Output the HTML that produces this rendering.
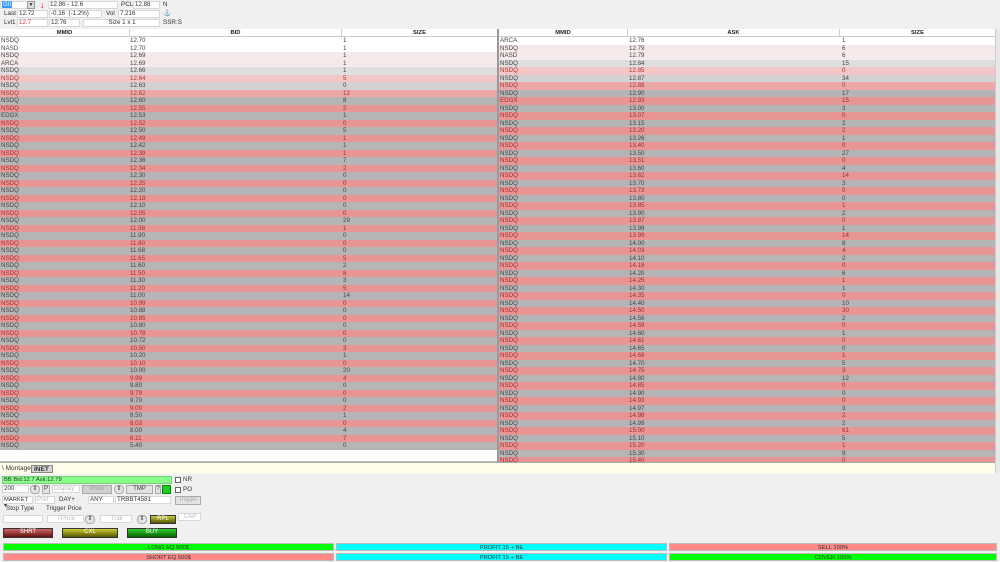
<!DOCTYPE html>
<html><head><meta charset="utf-8"><style>
*{margin:0;padding:0;box-sizing:border-box}
body{width:1000px;height:562px;overflow:hidden;background:#f0f0f0;font-family:"Liberation Sans",sans-serif;font-size:6.3px;color:#333;position:relative}
.abs{position:absolute}
.f{position:absolute;background:#fff;border:1px solid #d8d8d8;height:8px;line-height:6px;padding-left:1px;font-size:6.2px}
.l{position:absolute;font-size:6.3px;line-height:8px}
.tbl{position:absolute;top:29px;background:#fff;overflow:hidden}
.hd{height:8px;background:#fff;border-bottom:1px solid #ccc;position:relative;font-weight:bold;font-size:5.8px;line-height:8px;color:#222}
.hd span{position:absolute;text-align:center;top:0;border-right:1px solid #ccc;height:8px}
.r{height:7.5px;position:relative;line-height:7.5px;font-size:6.2px;color:#444}
.r i,.r b,.r u{position:absolute;font-style:normal;font-weight:normal;text-decoration:none;top:0}
.r i{left:1px}.r b{left:130px}.r u{left:343px}
.w{background:#fff}.a{background:#f6eaea}.g1{background:#dedede}.p1{background:#f3c6c6;color:#a33}.g2{background:#d2d2d2}.p2{background:#eba8a8;color:#a33}.g{background:#b5b5b5}.p{background:#e89595;color:#a42c2c}
.btn{position:absolute;border:1px solid #aaa;background:#e4e4e4;text-align:center;font-size:6px;line-height:7px;height:9px}
.bar{position:absolute;height:8px;text-align:center;font-size:5.8px;line-height:8px;color:#333;border:1px solid #bbb}
</style></head><body>
<!-- header -->
<div class="f" style="left:0;top:1px;width:35px"><span style="background:#39f;color:#fff;padding:0 1px">GII</span></div>
<div class="abs" style="left:27px;top:1px;width:8px;height:8px;background:#ddd;border:1px solid #999;font-size:5px;text-align:center;line-height:6px">▼</div>
<div class="abs" style="left:40px;top:1px;color:#e00;font-size:9px;line-height:8px;font-weight:bold">↓</div>
<div class="f" style="left:48px;top:1px;width:70px">12.86 - 12.6</div>
<div class="l" style="left:121px;top:1px">PCL</div>
<div class="f" style="left:133px;top:1px;width:27px">12.88</div>
<div class="l" style="left:163px;top:1px">N</div>
<div class="l" style="left:4px;top:10px">Last</div>
<div class="f" style="left:17px;top:10px;width:31px">12.72</div>
<div class="f" style="left:49px;top:10px;width:53px">-0.16 &nbsp;(-1.2%)</div>
<div class="l" style="left:106px;top:10px">Vol</div>
<div class="f" style="left:118px;top:10px;width:42px">7.216</div>
<div class="l" style="left:163px;top:10px">⚓</div>
<div class="l" style="left:4px;top:19px">Lvl1</div>
<div class="f" style="left:17px;top:19px;width:31px;color:#e33">12.7</div>
<div class="f" style="left:49px;top:19px;width:31px">12.76</div>
<div class="f" style="left:83px;top:19px;width:77px;text-align:center">Size 1 x 1</div>
<div class="l" style="left:163px;top:19px">SSR:S</div>

<!-- bid table -->
<div class="tbl" style="left:0;width:497px;height:433px">
<div class="hd"><span style="left:0;width:130px">MMID</span><span style="left:130px;width:212px">BID</span><span style="left:342px;width:155px;border:0">SIZE</span></div>
<div class="r w"><i>NSDQ</i><b>12.70</b><u>1</u></div>
<div class="r w"><i>NASD</i><b>12.70</b><u>1</u></div>
<div class="r a"><i>NSDQ</i><b>12.69</b><u>1</u></div>
<div class="r a"><i>ARCA</i><b>12.69</b><u>1</u></div>
<div class="r g1"><i>NSDQ</i><b>12.66</b><u>1</u></div>
<div class="r p1"><i>NSDQ</i><b>12.64</b><u>5</u></div>
<div class="r g2"><i>NSDQ</i><b>12.63</b><u>0</u></div>
<div class="r p2"><i>NSDQ</i><b>12.62</b><u>12</u></div>
<div class="r g"><i>NSDQ</i><b>12.60</b><u>8</u></div>
<div class="r p"><i>NSDQ</i><b>12.55</b><u>2</u></div>
<div class="r g"><i>EDGX</i><b>12.53</b><u>1</u></div>
<div class="r p"><i>NSDQ</i><b>12.52</b><u>0</u></div>
<div class="r g"><i>NSDQ</i><b>12.50</b><u>5</u></div>
<div class="r p"><i>NSDQ</i><b>12.49</b><u>1</u></div>
<div class="r g"><i>NSDQ</i><b>12.42</b><u>1</u></div>
<div class="r p"><i>NSDQ</i><b>12.39</b><u>1</u></div>
<div class="r g"><i>NSDQ</i><b>12.36</b><u>7</u></div>
<div class="r p"><i>NSDQ</i><b>12.34</b><u>2</u></div>
<div class="r g"><i>NSDQ</i><b>12.30</b><u>0</u></div>
<div class="r p"><i>NSDQ</i><b>12.25</b><u>0</u></div>
<div class="r g"><i>NSDQ</i><b>12.20</b><u>0</u></div>
<div class="r p"><i>NSDQ</i><b>12.18</b><u>0</u></div>
<div class="r g"><i>NSDQ</i><b>12.10</b><u>0</u></div>
<div class="r p"><i>NSDQ</i><b>12.05</b><u>0</u></div>
<div class="r g"><i>NSDQ</i><b>12.00</b><u>29</u></div>
<div class="r p"><i>NSDQ</i><b>11.98</b><u>1</u></div>
<div class="r g"><i>NSDQ</i><b>11.90</b><u>0</u></div>
<div class="r p"><i>NSDQ</i><b>11.80</b><u>0</u></div>
<div class="r g"><i>NSDQ</i><b>11.68</b><u>0</u></div>
<div class="r p"><i>NSDQ</i><b>11.65</b><u>5</u></div>
<div class="r g"><i>NSDQ</i><b>11.60</b><u>2</u></div>
<div class="r p"><i>NSDQ</i><b>11.50</b><u>8</u></div>
<div class="r g"><i>NSDQ</i><b>11.30</b><u>3</u></div>
<div class="r p"><i>NSDQ</i><b>11.20</b><u>5</u></div>
<div class="r g"><i>NSDQ</i><b>11.00</b><u>14</u></div>
<div class="r p"><i>NSDQ</i><b>10.99</b><u>0</u></div>
<div class="r g"><i>NSDQ</i><b>10.88</b><u>0</u></div>
<div class="r p"><i>NSDQ</i><b>10.85</b><u>0</u></div>
<div class="r g"><i>NSDQ</i><b>10.80</b><u>0</u></div>
<div class="r p"><i>NSDQ</i><b>10.78</b><u>0</u></div>
<div class="r g"><i>NSDQ</i><b>10.72</b><u>0</u></div>
<div class="r p"><i>NSDQ</i><b>10.50</b><u>3</u></div>
<div class="r g"><i>NSDQ</i><b>10.20</b><u>1</u></div>
<div class="r p"><i>NSDQ</i><b>10.10</b><u>0</u></div>
<div class="r g"><i>NSDQ</i><b>10.00</b><u>20</u></div>
<div class="r p"><i>NSDQ</i><b>9.99</b><u>4</u></div>
<div class="r g"><i>NSDQ</i><b>9.80</b><u>0</u></div>
<div class="r p"><i>NSDQ</i><b>9.79</b><u>0</u></div>
<div class="r g"><i>NSDQ</i><b>9.70</b><u>0</u></div>
<div class="r p"><i>NSDQ</i><b>9.00</b><u>2</u></div>
<div class="r g"><i>NSDQ</i><b>8.50</b><u>1</u></div>
<div class="r p"><i>NSDQ</i><b>8.03</b><u>0</u></div>
<div class="r g"><i>NSDQ</i><b>8.00</b><u>4</u></div>
<div class="r p"><i>NSDQ</i><b>6.11</b><u>7</u></div>
<div class="r g"><i>NSDQ</i><b>5.40</b><u>0</u></div>
</div>
<div class="abs" style="left:0;top:461px;width:497px;height:1px;background:#bbb"></div>
<div class="abs" style="left:497px;top:29px;width:2px;height:433px;background:#999"></div>

<!-- ask table -->
<div class="tbl" style="left:499px;width:496px;height:433px">
<div class="hd"><span style="left:0;width:129px">MMID</span><span style="left:129px;width:212px">ASK</span><span style="left:341px;width:155px;border:0">SIZE</span></div>
<div class="r w"><i>ARCA</i><b>12.76</b><u>1</u></div>
<div class="r a"><i>NSDQ</i><b>12.79</b><u>6</u></div>
<div class="r a"><i>NASD</i><b>12.79</b><u>6</u></div>
<div class="r g1"><i>NSDQ</i><b>12.84</b><u>15</u></div>
<div class="r p1"><i>NSDQ</i><b>12.85</b><u>0</u></div>
<div class="r g2"><i>NSDQ</i><b>12.87</b><u>34</u></div>
<div class="r p2"><i>NSDQ</i><b>12.88</b><u>0</u></div>
<div class="r g"><i>NSDQ</i><b>12.90</b><u>17</u></div>
<div class="r p"><i>EDGX</i><b>12.93</b><u>15</u></div>
<div class="r g"><i>NSDQ</i><b>13.00</b><u>3</u></div>
<div class="r p"><i>NSDQ</i><b>13.07</b><u>0</u></div>
<div class="r g"><i>NSDQ</i><b>13.15</b><u>2</u></div>
<div class="r p"><i>NSDQ</i><b>13.20</b><u>2</u></div>
<div class="r g"><i>NSDQ</i><b>13.26</b><u>1</u></div>
<div class="r p"><i>NSDQ</i><b>13.40</b><u>0</u></div>
<div class="r g"><i>NSDQ</i><b>13.50</b><u>27</u></div>
<div class="r p"><i>NSDQ</i><b>13.51</b><u>0</u></div>
<div class="r g"><i>NSDQ</i><b>13.60</b><u>4</u></div>
<div class="r p"><i>NSDQ</i><b>13.62</b><u>14</u></div>
<div class="r g"><i>NSDQ</i><b>13.70</b><u>3</u></div>
<div class="r p"><i>NSDQ</i><b>13.73</b><u>0</u></div>
<div class="r g"><i>NSDQ</i><b>13.80</b><u>0</u></div>
<div class="r p"><i>NSDQ</i><b>13.85</b><u>1</u></div>
<div class="r g"><i>NSDQ</i><b>13.90</b><u>2</u></div>
<div class="r p"><i>NSDQ</i><b>13.97</b><u>0</u></div>
<div class="r g"><i>NSDQ</i><b>13.98</b><u>1</u></div>
<div class="r p"><i>NSDQ</i><b>13.99</b><u>14</u></div>
<div class="r g"><i>NSDQ</i><b>14.00</b><u>8</u></div>
<div class="r p"><i>NSDQ</i><b>14.03</b><u>4</u></div>
<div class="r g"><i>NSDQ</i><b>14.10</b><u>2</u></div>
<div class="r p"><i>NSDQ</i><b>14.18</b><u>0</u></div>
<div class="r g"><i>NSDQ</i><b>14.20</b><u>6</u></div>
<div class="r p"><i>NSDQ</i><b>14.25</b><u>1</u></div>
<div class="r g"><i>NSDQ</i><b>14.30</b><u>1</u></div>
<div class="r p"><i>NSDQ</i><b>14.35</b><u>0</u></div>
<div class="r g"><i>NSDQ</i><b>14.40</b><u>10</u></div>
<div class="r p"><i>NSDQ</i><b>14.50</b><u>30</u></div>
<div class="r g"><i>NSDQ</i><b>14.56</b><u>2</u></div>
<div class="r p"><i>NSDQ</i><b>14.59</b><u>0</u></div>
<div class="r g"><i>NSDQ</i><b>14.60</b><u>1</u></div>
<div class="r p"><i>NSDQ</i><b>14.61</b><u>0</u></div>
<div class="r g"><i>NSDQ</i><b>14.65</b><u>0</u></div>
<div class="r p"><i>NSDQ</i><b>14.68</b><u>1</u></div>
<div class="r g"><i>NSDQ</i><b>14.70</b><u>5</u></div>
<div class="r p"><i>NSDQ</i><b>14.75</b><u>3</u></div>
<div class="r g"><i>NSDQ</i><b>14.80</b><u>12</u></div>
<div class="r p"><i>NSDQ</i><b>14.85</b><u>0</u></div>
<div class="r g"><i>NSDQ</i><b>14.90</b><u>0</u></div>
<div class="r p"><i>NSDQ</i><b>14.93</b><u>0</u></div>
<div class="r g"><i>NSDQ</i><b>14.97</b><u>3</u></div>
<div class="r p"><i>NSDQ</i><b>14.98</b><u>2</u></div>
<div class="r g"><i>NSDQ</i><b>14.99</b><u>2</u></div>
<div class="r p"><i>NSDQ</i><b>15.00</b><u>61</u></div>
<div class="r g"><i>NSDQ</i><b>15.10</b><u>5</u></div>
<div class="r p"><i>NSDQ</i><b>15.20</b><u>1</u></div>
<div class="r g"><i>NSDQ</i><b>15.30</b><u>9</u></div>
<div class="r p"><i>NSDQ</i><b>15.40</b><u>0</u></div>
</div>
<div class="abs" style="left:995px;top:29px;width:5px;height:444px;background:#e8e8e8;border-left:1px solid #ccc"></div>

<!-- tabs -->
<div class="abs" style="left:0;top:462px;width:995px;height:12px;background:#fdfde9;border-top:1px solid #aaa"></div>
<div class="l" style="left:2px;top:465px;font-size:6.5px">\ Montage</div>
<div class="abs" style="left:31px;top:465px;width:22px;height:8px;background:#d4d4d4;border:1px solid #888;font-size:6.5px;line-height:7px;font-weight:bold;padding-left:2px">INET</div>

<!-- order entry -->
<div class="abs" style="left:2px;top:476px;width:170px;height:8px;background:#8f8;border:1px solid #7c7;font-size:5.8px;line-height:6px;padding-left:1px">BB Bid:12.7 Ask:12.79</div>
<div class="abs" style="left:175px;top:477px;width:6px;height:6px;border:1px solid #666;background:#fff"></div>
<div class="l" style="left:183px;top:476px">NR</div>
<div class="f" style="left:2px;top:485px;width:27px">200</div>
<div class="btn" style="left:30px;top:485px;width:10px;border-radius:4px">⇕</div>
<div class="btn" style="left:42px;top:485px;width:8px">P</div>
<div class="f" style="left:52px;top:485px;width:28px;color:#bbb">Display</div>
<div class="btn" style="left:82px;top:485px;width:30px;background:#cfcfcf;color:#999">Price</div>
<div class="btn" style="left:114px;top:485px;width:10px;border-radius:4px">⇕</div>
<div class="btn" style="left:126px;top:485px;width:27px">TMP</div>
<div class="btn" style="left:155px;top:485px;width:6px">?</div>
<div class="abs" style="left:162px;top:485px;width:9px;height:9px;background:#2c2;border:1px solid #080"></div>
<div class="abs" style="left:175px;top:487px;width:6px;height:6px;border:1px solid #666;background:#fff"></div>
<div class="l" style="left:183px;top:486px">PO</div>
<div class="f" style="left:2px;top:496px;width:31px;font-size:5.8px">MARKET ▾</div>
<div class="f" style="left:35px;top:496px;width:20px;color:#bbb">Pref</div>
<div class="f" style="left:57px;top:496px;width:29px;background:#f0f0f0;border-color:#f0f0f0">DAY+</div>
<div class="f" style="left:88px;top:496px;width:26px">ANY</div>
<div class="f" style="left:115px;top:496px;width:56px">TRBBT4581</div>
<div class="btn" style="left:175px;top:496px;width:26px;color:#aaa">Trigger</div>
<div class="l" style="left:6px;top:505px">Stop Type</div>
<div class="l" style="left:46px;top:505px">Trigger Price</div>
<div class="f" style="left:3px;top:515px;width:40px"></div>
<div class="f" style="left:47px;top:515px;width:37px;color:#bbb;text-align:center">TPrice</div>
<div class="btn" style="left:85px;top:515px;width:10px;border-radius:4px">⇕</div>
<div class="f" style="left:100px;top:515px;width:32px;color:#bbb;text-align:center">Trail</div>
<div class="btn" style="left:137px;top:515px;width:10px;border-radius:4px">⇕</div>
<div class="btn" style="left:150px;top:515px;width:26px;background:linear-gradient(#cc4,#550);color:#fff;border-color:#333">RPL</div>
<div class="f" style="left:178px;top:513px;width:23px;color:#bbb;text-align:center">CAP</div>
<div class="btn" style="left:3px;top:528px;width:50px;height:10px;background:linear-gradient(#c66,#611);color:#fff;border-color:#333">SHRT</div>
<div class="btn" style="left:62px;top:528px;width:56px;height:10px;background:linear-gradient(#cc3,#550);color:#fff;border-color:#333">CXL</div>
<div class="btn" style="left:127px;top:528px;width:50px;height:10px;background:linear-gradient(#3c3,#060);color:#fff;border-color:#333">BUY</div>

<!-- bars -->
<div class="bar" style="left:3px;top:543px;width:331px;background:#0f0">LONG EQ 500$</div>
<div class="bar" style="left:336px;top:543px;width:331px;background:#0ff">PROFIT 15 + BE</div>
<div class="bar" style="left:669px;top:543px;width:328px;background:#f88">SELL 100%</div>
<div class="bar" style="left:3px;top:553px;width:331px;background:#f88">SHORT EQ 500$</div>
<div class="bar" style="left:336px;top:553px;width:331px;background:#0ff">PROFIT 15 + BE</div>
<div class="bar" style="left:669px;top:553px;width:328px;background:#0f0">COVER 100%</div>
</body></html>
